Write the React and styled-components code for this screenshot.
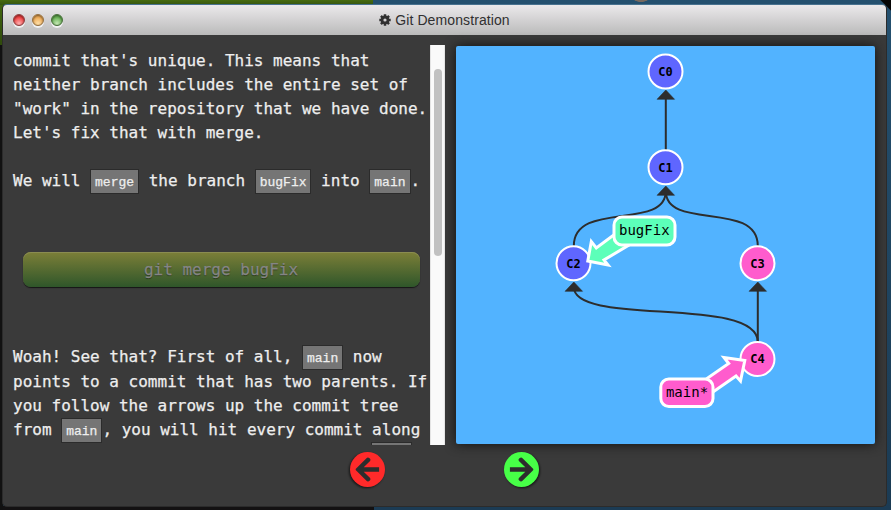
import React from "react";
import styled, { createGlobalStyle } from "styled-components";

const Global = createGlobalStyle`
  *, *::before, *::after { box-sizing: border-box; }
  body { margin: 0; overflow: hidden; }
`;

const mono = `"DejaVu Sans Mono", Menlo, monospace`;

const Desktop = styled.div`
  width: 891px;
  height: 510px;
  padding: 4px 4px 3px 2px;
  background:
    linear-gradient(225deg, #050505 0 7px, transparent 8px),
    radial-gradient(ellipse 7px 2px at 641px 0, #77695f 0 80%, transparent),
    linear-gradient(#466b10, #355410) 0 0 / 373px 5px no-repeat,
    linear-gradient(#44690f, #2f4a0c) 0 0 / 3px 45px no-repeat,
    linear-gradient(#111, #111) 0 45px / 3px 465px no-repeat,
    linear-gradient(#131112, #131112) 0 506px / 374px 4px no-repeat,
    linear-gradient(#24506f, #1b3b54);
`;

const Window = styled.main`
  display: flex;
  flex-direction: column;
  height: 503px;
  border: 1px solid #2b2b2b;
  border-top-color: #47718f;
  border-radius: 5px;
  background: #3a3a3a;
  overflow: hidden;
`;

const TitleBar = styled.header`
  display: grid;
  grid-template-columns: 1fr auto 1fr;
  align-items: center;
  flex: 0 0 30px;
  padding: 0 10px;
  background: linear-gradient(#ebe9eb, #bababa);
  font: 14px "Liberation Sans", Arial, sans-serif;
  color: #303030;
`;

const Lights = styled.div`
  display: flex;
  gap: 7px;
`;

const Light = styled.i`
  width: 12px;
  height: 12px;
  border-radius: 50%;
  border: 1px solid ${(p) => p.$edge};
  background: radial-gradient(circle at 50% 85%, ${(p) => p.$glow}, ${(p) => p.$tone} 65%);
  box-shadow: 0 2px 0 rgba(255, 255, 255, 0.75), inset 0 1px 2px rgba(0, 0, 0, 0.5);
`;

const Title = styled.h1`
  display: flex;
  align-items: center;
  gap: 4px;
  margin: 0;
  font: inherit;
  letter-spacing: 0.1px;
`;

const Content = styled.div`
  display: flex;
  flex: 0 0 400px;
  margin-top: 10px;
`;

const Lesson = styled.section`
  display: flex;
  width: 442px;
  height: 400px;
  overflow: hidden;
`;

const Prose = styled.div`
  width: 427px;
  padding: 4px 0 0 10px;
  font: 16px/24px ${mono};
  color: #eee;
  -webkit-text-stroke: 0.25px;
  white-space: pre;
`;

const Paragraph = styled.p`
  margin: 0 0 ${(p) => p.$after || 0}px;
`;

const Line = styled.span`
  display: block;
  height: ${(p) => (p.$tall ? 25 : 24)}px;
`;

const Code = styled.code`
  display: inline-block;
  height: 25px;
  min-width: 41px;
  margin: 0 0 -1px;
  padding: 1px 4px 0;
  border: 1px solid #2b2b2b;
  background: #757575;
  color: #eee;
  font: 13px/23px "Liberation Mono", "Courier New", monospace;
  vertical-align: top;
  margin-left: ${(p) => p.$indent || 0}px;
`;

const Command = styled.button`
  display: block;
  width: 397px;
  height: 35px;
  margin: 0 0 58px 10px;
  padding: 0 1px 0 0;
  border: 0;
  border-radius: 8px;
  background: linear-gradient(#7c7f38, #2f562a);
  box-shadow: 0 1px 1px #161616, inset 0 1px 0 #8a8c51;
  color: #858585;
  font: 16px/35px ${mono};
  text-shadow: 0 1px 1px rgba(0, 0, 0, 0.45);
`;

const ScrollTrack = styled.div`
  width: 15px;
  padding: 24px 3px 0 4px;
  border-left: 1px solid #e4e4e4;
  border-right: 1px solid #e9e9e9;
  background: #fafafa;
`;

const ScrollThumb = styled.div`
  width: 8px;
  height: 187px;
  margin-left: -1px;
  border-radius: 4px;
  background: #c1c1c1;
`;

const Canvas = styled.section`
  width: 419px;
  height: 398px;
  margin: 1px 0 0 11px;
  border-radius: 2px;
  background: #52b3ff;
  box-shadow: 0 0 12px #111;
`;

const Graph = styled.svg`
  display: block;
  font-family: ${mono};
`;

const Navigation = styled.nav`
  display: flex;
  gap: 118px;
  padding: 6px 0 0 346px;
`;

const NavButton = styled.button`
  width: 36px;
  height: 36px;
  padding: 0;
  border: 0;
  background: none;
  filter: drop-shadow(${(p) => p.$shade} 1px 1px rgba(0, 0, 0, 0.65));
  svg { display: block; }
`;

const ink = "#2d2d2d";
const commits = [
  { id: "C0", x: 665.5, y: 71.5, fill: "#5f66ff" },
  { id: "C1", x: 665.5, y: 167.3, fill: "#5f66ff" },
  { id: "C2", x: 573.5, y: 263.2, fill: "#5f66ff" },
  { id: "C3", x: 757.5, y: 263.2, fill: "#ff5ccd" },
  { id: "C4", x: 757.5, y: 359, fill: "#ff5ccd" },
];
const heads = [[665.8, 90], [665.8, 186], [573.8, 282], [757.8, 282]];

const Gear = () => (
  <svg width="12" height="12" viewBox="-6 -6 12 12" fill="none" stroke="#303030">
    <circle r="3" strokeWidth="2.8" />
    {[0, 45, 90, 135].map((a) => (
      <path key={a} d="M0-5.7V-3.5M0 3.5V5.7" strokeWidth="2.5" transform={`rotate(${a})`} />
    ))}
  </svg>
);

const Arrow = ({ color, flip }) => (
  <svg width="36" height="36" viewBox="-18.5 -18.5 36 36">
    <circle r="17.5" fill={color} />
    <path
      d="M-11.6-2.3H3.8L-2.6-8.5Q-3.6-9.8-2.4-10.9L-1.2-11.8Q0-12.4 1-11.3L11.6-.8Q12.2 0 11.6.8L1 11.3Q0 12.4-1.2 11.8L-2.4 10.9Q-3.6 9.8-2.6 8.5L3.8 2.3H-11.6Z"
      fill={ink}
      transform={flip ? "scale(-1 1)" : undefined}
    />
  </svg>
);

const CommitTree = () => (
  <Graph width="419" height="398" viewBox="456 46 419 398">
    <g fill="none" stroke={ink} strokeWidth="2">
      <path d="M665.8 150V95" />
      <path d="M573.8 246C573.8 200 665.8 231 665.8 191" />
      <path d="M757.8 246C757.8 200 665.8 231 665.8 191" />
      <path d="M757.8 342V287" />
      <path d="M757.8 342C757.8 295 573.8 327 573.8 287" />
    </g>
    {heads.map(([x, y]) => (
      <path key={`${x}-${y}`} d={`M${x} ${y}l8.7 9.3h-17.4z`} fill={ink} stroke={ink} strokeWidth=".6" />
    ))}
    {commits.map((c) => (
      <g key={c.id}>
        <circle cx={c.x} cy={c.y} r="17" fill={c.fill} stroke="#fff" strokeWidth="2" />
        <text x={c.x} y={c.y + 4.3} textAnchor="middle" fontSize="12" fontWeight="700">{c.id}</text>
      </g>
    ))}
    <g stroke="#fff" strokeWidth="3">
      <path fill="#5cffb9" d="M587.8 261L591.3 241.5L596.3 248L619 231L629 245L604 260L608 265Z" />
      <rect x="614" y="217" width="61" height="28" rx="8" fill="#5cffb9" />
      <path fill="#ff5ccd" d="M744.8 360.5L724 357.5L728.7 363.5L704 380.5L713 392L736 376L740.5 381Z" />
      <rect x="660.8" y="379" width="52.2" height="27.5" rx="8" fill="#ff5ccd" />
    </g>
    <text x="644.3" y="235.2" textAnchor="middle" fontSize="14">bugFix</text>
    <text x="687" y="397.2" textAnchor="middle" fontSize="14">main*</text>
  </Graph>
);

export default function App() {
  return (
    <>
      <Global />
      <Desktop>
        <Window>
          <TitleBar>
            <Lights>
              <Light $edge="#8d3c3c" $tone="#f04040" $glow="#ffb0b0" />
              <Light $edge="#96703e" $tone="#eeaa55" $glow="#ffe0a8" />
              <Light $edge="#477039" $tone="#66b052" $glow="#c5e8b5" />
            </Lights>
            <Title><Gear />Git Demonstration</Title>
          </TitleBar>
          <Content>
            <Lesson>
              <Prose>
                <Paragraph $after={24}>
                  <Line>commit that's unique. This means that</Line>
                  <Line>neither branch includes the entire set of</Line>
                  <Line>"work" in the repository that we have done.</Line>
                  <Line>Let's fix that with merge.</Line>
                </Paragraph>
                <Paragraph $after={59}>
                  <Line>We will <Code>merge</Code> the branch <Code>bugFix</Code> into <Code>main</Code>.</Line>
                </Paragraph>
                <Command>git merge bugFix</Command>
                <Paragraph>
                  <Line $tall>Woah! See that? First of all, <Code>main</Code> now</Line>
                  <Line>points to a commit that has two parents. If</Line>
                  <Line>you follow the arrows up the commit tree</Line>
                  <Line>from <Code>main</Code>, you will hit every commit along</Line>
                  <Line><Code $indent={358} /></Line>
                </Paragraph>
              </Prose>
              <ScrollTrack><ScrollThumb /></ScrollTrack>
            </Lesson>
            <Canvas><CommitTree /></Canvas>
          </Content>
          <Navigation>
            <NavButton aria-label="Previous" $shade="-1px"><Arrow color="#ff2a2a" flip /></NavButton>
            <NavButton aria-label="Next" $shade="1px"><Arrow color="#47ff47" /></NavButton>
          </Navigation>
        </Window>
      </Desktop>
    </>
  );
}
